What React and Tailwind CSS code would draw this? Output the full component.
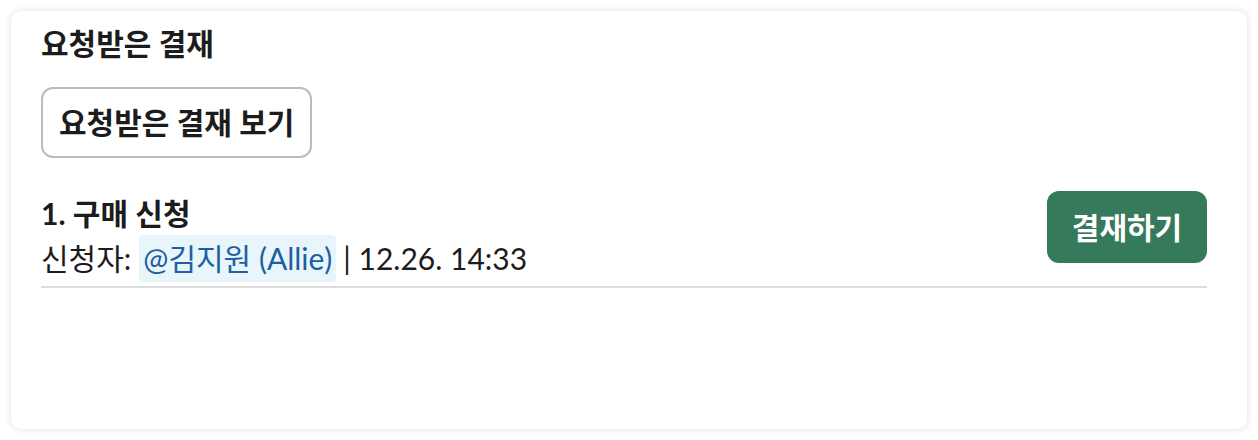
export default function App() {
  const font = {
    fontFamily: 'Lato, "Noto Sans CJK KR", "Noto Sans", sans-serif',
  };

  return (
    <div className="min-h-[440px] w-[1258px] bg-white p-[11px]" style={font}>
      <div className="flex h-[418px] w-[1236px] flex-col rounded-[10px] bg-white pt-[12px] pl-[30px] pr-[40px] shadow-[0_0_8px_rgba(0,0,0,0.12)]">
        <h2 className="h-[40px] text-[30px] leading-[40px] font-bold text-[#1d1c1d]">
          요청받은 결재
        </h2>

        <div className="mt-[24px]">
          <button className="h-[71px] rounded-[12px] border-2 border-[#bcbcbc] bg-white px-[16px] text-[30px] font-bold text-[#1d1c1d]">
            요청받은 결재 보기
          </button>
        </div>

        <div className="mt-[33px] flex items-start justify-between border-b-2 border-[#dddddd] pb-[4px]">
          <div className="flex flex-col">
            <div className="h-[44px] text-[30px] leading-[44px] font-bold text-[#1d1c1d]">
              1. 구매 신청
            </div>
            <div className="flex h-[47px] items-center text-[30px] text-[#1d1c1d]">
              <span>신청자:</span>
              <span className="ml-[8px] rounded-[4px] bg-[#e8f5fa] px-[4px] leading-[47px] text-[#1d5fa0]">
                @김지원 (Allie)
              </span>
              <span className="ml-[7px]">| 12.26. 14:33</span>
            </div>
          </div>
          <button className="h-[72px] w-[160px] rounded-[12px] bg-[#357a5b] text-[30px] font-bold text-white">
            결재하기
          </button>
        </div>
      </div>
    </div>
  );
}
